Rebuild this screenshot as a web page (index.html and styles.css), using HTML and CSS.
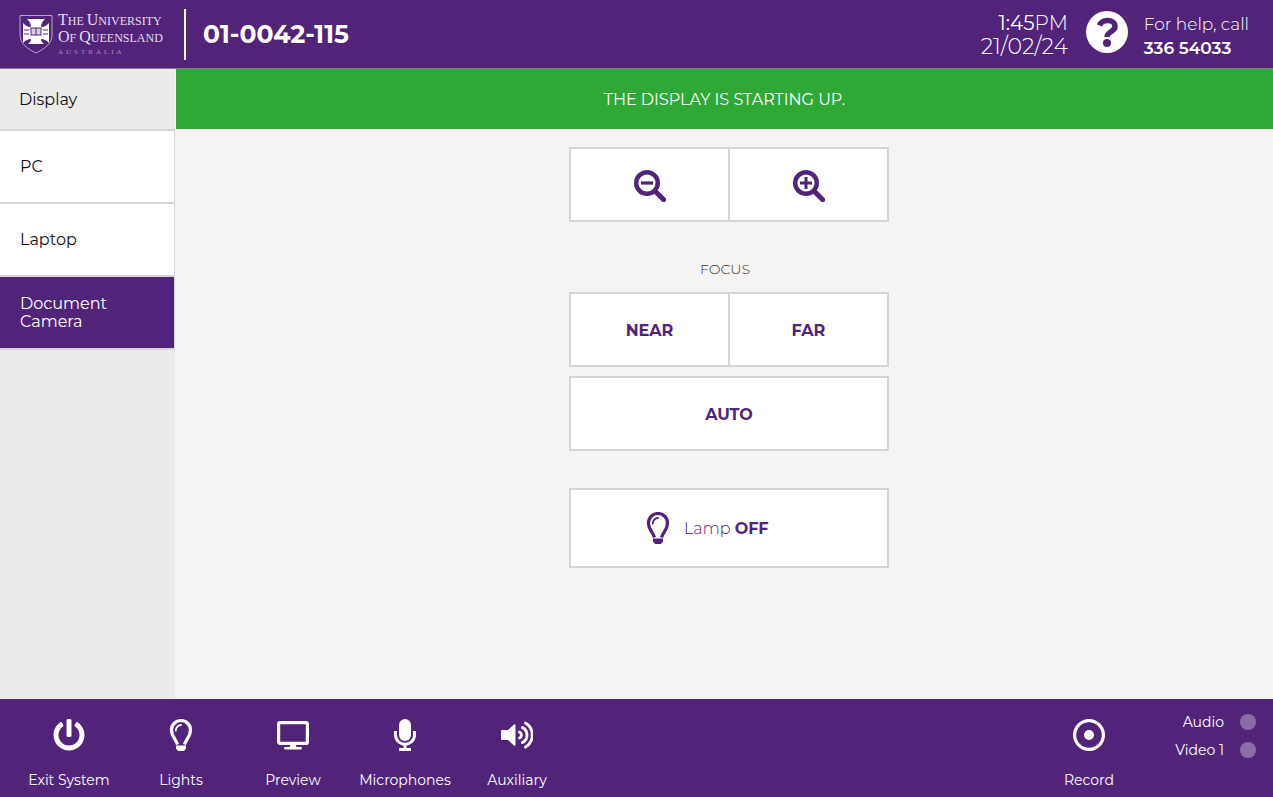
FILE: index.html
```html
<!DOCTYPE html>
<html lang="en">
<head>
    <meta charset="UTF-8">
    <meta name="viewport" content="width=device-width, initial-scale=1.0">
    <title>01-0042-115</title>
    <link rel="stylesheet" href="styles.css">
</head>
<body>

    <!-- shared shapes -->
    <svg class="defs" aria-hidden="true">
        <symbol id="bulb" viewBox="0 0 32 32">
            <path d="M12.500 25.500C11 20 6.500 17.500 6.500 10.900a9.500 9.400 0 0 1 19 0C25.500 17.500 21 20 19.500 25.500" fill="none" stroke="currentColor" stroke-width="3.200"/>
            <path d="M10.800 11.500a5.200 5.500 0 0 1 5.200-5.500" fill="none" stroke="currentColor" stroke-width="1.800" stroke-linecap="round"/>
            <path d="M11 26.500h10v3l-2 2.500h-6l-2-2.500z" fill="currentColor"/>
        </symbol>
        <symbol id="glass" viewBox="0 0 32 32">
            <circle cx="13" cy="13" r="10.800" fill="none" stroke="currentColor" stroke-width="4.400"/>
            <path d="M21 21l8.700 8.700" stroke="currentColor" stroke-width="5" stroke-linecap="round"/>
        </symbol>
    </svg>

    <header class="header">
        <div class="logo">
            <svg class="crest" viewBox="0 0 34 40" aria-hidden="true">
                <path d="M1 1.500h32V21c0 9-8 14-16 18C9 35 1 30 1 21z" fill="none" stroke="#b9a6ca" stroke-width="1"/>
                <path d="M8 5h18c-3 3-4 5-4 8 3 0 5-1 8-4v20c-3-3-5-4-8-4 0 2 1 3 3 5H9c2-2 3-3 3-5-3 0-5 1-8 4V9c3 3 5 4 8 4 0-3-1-5-4-8z" fill="#fff"/>
                <path d="M11.500 13.500h11v8h-11z" fill="#51247a"/>
                <path d="M12.500 14.500h4v6h-4zM17.500 14.500h4v6h-4z" fill="#d9cfe2"/>
                <path d="M5 16h5M5 20h5M24 16h5M24 20h5" stroke="#51247a" stroke-width="1"/>
            </svg>
            <div class="logo-text">
                <span class="logo-line"><b>T</b>HE <b>U</b>NIVERSITY</span>
                <span class="logo-line"><b>O</b>F <b>Q</b>UEENSLAND</span>
                <span class="logo-country">AUSTRALIA</span>
            </div>
        </div>
        <h1 class="room">01-0042-115</h1>
        <div class="clock">
            <div class="time">1:45<span>PM</span></div>
            <div class="date">21/02/24</div>
        </div>
        <button class="help-button" type="button" aria-label="Help">
            <svg viewBox="0 0 42 42">
                <circle cx="21" cy="21" r="21" fill="#fff"/>
                <path d="M13.500 14.500C15 10.800 18 9.500 21.500 9.500c4.500 0 7.500 2.300 7.500 6 0 5.500-8 5-8 10.500" fill="none" stroke="#51247a" stroke-width="5.500"/>
                <circle cx="21" cy="32" r="4" fill="#51247a"/>
            </svg>
        </button>
        <div class="help-text">
            <div>For help, call</div>
            <strong>336 54033</strong>
        </div>
    </header>

    <div class="content">
        <nav class="sidebar">
            <h2>Display</h2>
            <button class="source" type="button">PC</button>
            <button class="source" type="button">Laptop</button>
            <button class="source active" type="button">Document Camera</button>
        </nav>

        <main class="main">
            <div class="banner" role="status">THE DISPLAY IS STARTING UP.</div>

            <div class="controls">
                <div class="button-row">
                    <button class="control" type="button" aria-label="Zoom out">
                        <svg class="icon" viewBox="0 0 32 32">
                            <use href="#glass"/>
                            <path d="M7 13h12" stroke="currentColor" stroke-width="3.200"/>
                        </svg>
                    </button>
                    <button class="control" type="button" aria-label="Zoom in">
                        <svg class="icon" viewBox="0 0 32 32">
                            <use href="#glass"/>
                            <path d="M7 13h12M13 7v12" stroke="currentColor" stroke-width="3"/>
                        </svg>
                    </button>
                </div>

                <h3>FOCUS</h3>
                <div class="button-row">
                    <button class="control" type="button">NEAR</button>
                    <button class="control" type="button">FAR</button>
                </div>
                <button class="control auto" type="button">AUTO</button>

                <button class="lamp" type="button">
                    <svg class="icon"><use href="#bulb"/></svg>
                    <span>Lamp <strong>OFF</strong></span>
                </button>
            </div>
        </main>
    </div>

    <footer class="footer">
        <button class="tool" type="button">
            <svg class="icon" viewBox="0 0 512 512">
                <path fill="currentColor" d="M400 54.1c63 45 104 118.600 104 201.900 0 136.800-110.800 247.700-247.500 248C120 504.300 8.200 393 8 256.400 7.900 173.100 48.900 99.300 111.800 54.200c11.700-8.300 28-4.800 35 7.700L162.600 90c5.900 10.500 3.100 23.800-6.600 31-41.500 30.800-68 79.600-68 134.900-.1 92.300 74.500 168.100 168 168.100 91.600 0 168.600-74.200 168-169.100-.3-51.800-24.700-101.800-68.100-134-9.700-7.200-12.400-20.500-6.500-30.900l15.800-28.100c7-12.400 23.200-16.100 34.800-7.800zM296 264V24c0-13.300-10.700-24-24-24h-32c-13.300 0-24 10.700-24 24v240c0 13.300 10.700 24 24 24h32c13.300 0 24-10.700 24-24z"/>
            </svg>
            Exit System
        </button>
        <button class="tool" type="button">
            <svg class="icon"><use href="#bulb"/></svg>
            Lights
        </button>
        <button class="tool" type="button">
            <svg class="icon" viewBox="0 0 32 32">
                <rect x="1.600" y="3.600" width="28.800" height="20.800" rx="1.500" fill="none" stroke="currentColor" stroke-width="3.200"/>
                <path d="M13.500 25h5l.8 3h4.200q1.500 0 1.500 1.200T23.500 30.500h-15Q7 30.500 7 29.200T8.500 28h4.200z" fill="currentColor"/>
            </svg>
            Preview
        </button>
        <button class="tool" type="button">
            <svg class="icon" viewBox="0 0 32 32">
                <rect x="10" y="0" width="12" height="22" rx="6" fill="currentColor"/>
                <path d="M6.500 12v4a9.500 9.200 0 0 0 19 0v-4M16 25v5M10 30.500h12" fill="none" stroke="currentColor" stroke-width="3"/>
            </svg>
            Microphones
        </button>
        <button class="tool" type="button">
            <svg class="icon" viewBox="0 0 32 32">
                <path d="M1 11h6l6-5.500q1.500-1 1.500 1v19q0 2-1.500 1L7 21H1q-1 0-1-1v-8q0-1 1-1z" fill="currentColor"/>
                <path d="M18.500 13a3.300 3.300 0 0 1 0 6M21.500 8.500a8.500 8.500 0 0 1 0 15M24.500 4a14 14 0 0 1 0 24" fill="none" stroke="currentColor" stroke-width="2.900" stroke-linecap="round"/>
            </svg>
            Auxiliary
        </button>
        <button class="tool record" type="button">
            <svg class="icon" viewBox="0 0 32 32">
                <circle cx="16" cy="16" r="14.400" fill="none" stroke="currentColor" stroke-width="3.200"/>
                <circle cx="16" cy="16" r="5" fill="currentColor"/>
            </svg>
            Record
        </button>
        <ul class="status">
            <li>Audio <i class="dot"></i></li>
            <li>Video 1 <i class="dot"></i></li>
        </ul>
    </footer>

</body>
</html>
```
FILE: styles.css
```css
* {
    box-sizing: border-box;
}

body {
    margin: 0;
    min-height: 100vh;
    display: flex;
    flex-direction: column;
    font-family: Gotham, Montserrat, Inter, sans-serif;
    font-size: 16px;
    color: #111;
    background: #f5f4f2;
}

button {
    font: inherit;
    color: inherit;
    border: none;
    background: none;
    padding: 0;
    cursor: pointer;
}

h1, h2, h3 {
    margin: 0;
    font-weight: normal;
}

.defs {
    position: absolute;
    width: 0;
    height: 0;
}

.icon {
    display: block;
    width: 32px;
    height: 32px;
    flex: none;
}

/* Header */
.header {
    display: flex;
    align-items: center;
    height: 69px;
    padding: 0 24px 0 19px;
    background: #51247a;
    border-bottom: 1px solid #85788f;
    color: #fff;
}

.logo {
    display: flex;
    align-items: center;
    gap: 5px;
    width: 165px;
}

.crest {
    width: 34px;
    height: 40px;
}

.logo-text {
    display: flex;
    flex-direction: column;
    padding-top: 2px;
    font-family: "Liberation Serif", serif;
    color: #e6deed;
    white-space: nowrap;
}

.logo-line {
    font-size: 12px;
    line-height: 15px;
}

.logo-line b {
    font-size: 16px;
    font-weight: normal;
}

.logo-country {
    font-size: 7px;
    line-height: 12px;
    letter-spacing: 3px;
    color: #a891bd;
}

.room {
    display: flex;
    align-items: center;
    height: 51px;
    padding-left: 17px;
    border-left: 2px solid #fff;
    font-size: 25px;
    font-weight: 700;
}

.clock {
    margin-left: auto;
    margin-right: 18px;
    padding-top: 2px;
    text-align: right;
    font-size: 20px;
    line-height: 23px;
}

.date {
    font-size: 22px;
}

.time span, .date {
    font-weight: 300;
}

.help-button {
    width: 42px;
    height: 42px;
    margin: 0 16px 4px 0;
}

.help-button svg {
    display: block;
}

.help-text {
    padding-top: 3px;
    font-size: 17px;
    line-height: 24px;
    font-weight: 300;
}

.help-text strong {
    font-weight: 600;
}

/* Sources */
.content {
    flex: 1;
    display: flex;
}

.sidebar {
    width: 175px;
    background: #ecebea;
}

.sidebar h2 {
    height: 62px;
    padding-left: 19px;
    border-bottom: 2px solid #d7d5d3;
    font-size: 16px;
    line-height: 62px;
}

.source {
    display: block;
    width: 100%;
    height: 73px;
    padding: 0 40px 0 20px;
    background: #fff;
    border-right: 1px solid #d7d5d3;
    border-bottom: 2px solid #d7d5d3;
    line-height: 18px;
    text-align: left;
}

.source.active {
    background: #51247a;
    color: #fff;
}

/* Camera controls */
.main {
    flex: 1;
}

.banner {
    height: 60px;
    margin-left: 1px;
    background: #2fa836;
    color: #fff;
    line-height: 62px;
    text-align: center;
}

.controls {
    display: flex;
    flex-direction: column;
    width: 330px;
    margin: 18px auto;
    padding-left: 10px;
    color: #51247a;
}

.button-row {
    display: flex;
    background: #fff;
    border: 2px solid #d7d5d3;
}

.control {
    flex: 1;
    display: flex;
    align-items: center;
    justify-content: center;
    height: 71px;
    padding-top: 2px;
    font-weight: 700;
}

.control + .control {
    border-left: 2px solid #d7d5d3;
}

.controls h3 {
    padding: 37px 8px 13px 0;
    font-size: 14px;
    font-weight: 300;
    line-height: 20px;
    text-align: center;
    color: #333;
}

.auto {
    flex: none;
    height: 75px;
    margin-top: 9px;
    background: #fff;
    border: 2px solid #d7d5d3;
}

.lamp {
    display: flex;
    align-items: center;
    gap: 10px;
    height: 80px;
    margin-top: 37px;
    padding-left: 71px;
    background: #fff;
    border: 2px solid #d7d5d3;
    font-weight: 300;
}

.lamp strong {
    font-weight: 700;
}

/* Footer */
.footer {
    display: flex;
    align-items: flex-start;
    height: 98px;
    padding: 9px 17px 0 13px;
    background: #51247a;
    color: #fff;
    font-size: 14px;
}

.tool {
    display: flex;
    flex-direction: column;
    align-items: center;
    gap: 19px;
    width: 112px;
    padding-top: 11px;
    line-height: 20px;
}

.record {
    margin-left: auto;
}

.status {
    width: 111px;
    margin: 0;
    padding: 0;
    list-style: none;
}

.status li {
    display: flex;
    align-items: center;
    justify-content: flex-end;
    gap: 16px;
    height: 28px;
}

.dot {
    width: 16px;
    height: 16px;
    border-radius: 50%;
    background: #8c6ca4;
}
```
